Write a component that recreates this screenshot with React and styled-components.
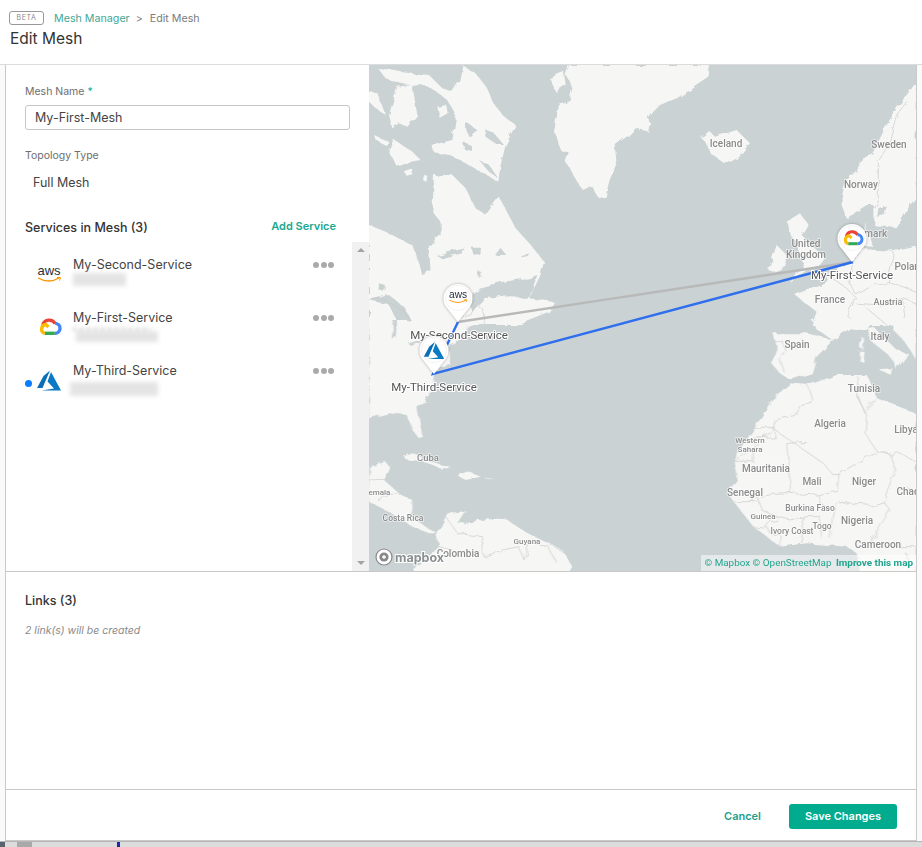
import React from 'react'
import styled, { createGlobalStyle } from 'styled-components'

const GlobalStyle = createGlobalStyle`
    html, body { margin: 0; padding: 0; background: #fff; }
    body { font-family: "Inter", "Liberation Sans", sans-serif; color: #333; }
`

const services = [
    { name: 'My-Second-Service', logo: 'aws', blur: { left: 0, width: 53, top: 0, height: 13 } },
    { name: 'My-First-Service', logo: 'gcp', blur: { left: 3, width: 82, top: 5, height: 11 }, peek: true },
    { name: 'My-Third-Service', logo: 'azure', blur: { left: -3, width: 88, top: 3, height: 14 }, active: true },
]

// coastlines are traced per quadrant of the map, in 3x coordinates
const northWest = {
    land: [
        'M600,0 L590,30 610,70 600,110 570,120 560,170 555,200 580,260 600,260 590,290 620,340 640,375 670,365 690,400 710,395 720,350 745,290 740,240 780,210 800,190 840,200 L840,0 Z',
        'M25,8 L100,22 180,30 220,70 250,80 270,50 280,0 320,25 350,65 375,115 400,150 440,180 410,240 395,300 388,350 340,325 290,295 240,270 195,262 190,240 250,225 255,195 262,150 240,110 210,85 170,60 130,62 90,55 50,40 Z',
        'M85,65 L130,60 145,150 115,185 90,175 70,190 60,150 Z',
        'M0,75 L25,85 50,150 20,130 0,110 Z',
        'M75,225 L130,260 155,285 125,290 85,305 60,265 Z',
        'M15,210 L60,230 50,240 20,225 Z',
        'M205,125 L232,120 236,145 212,158 Z',
        'M108,322 L134,312 130,328 112,332 Z',
        'M165,330 L175,332 172,350 162,346 Z',
        'M0,480 L50,500 130,540 160,630 185,620 180,550 215,510 215,470 190,440 195,330 250,330 290,370 320,430 350,450 390,395 440,490 490,545 525,590 515,630 480,700 560,712 540,740 440,780 L0,780 Z',
        'M540,40 L585,20 590,60 560,80 Z',
    ],
    water: [
        'M290,170 L325,195 300,215 292,195 Z',
        'M345,190 L375,205 405,240 385,240 350,215 Z',
        'M283,230 L305,240 310,258 285,252 Z',
        'M330,285 L360,300 388,340 360,320 Z',
        'M300,700 L340,665 400,650 480,640 505,630 478,705 420,690 345,700 310,740 Z',
        'M200,570 L290,550 280,565 220,578 Z',
        'M305,545 L335,545 335,570 310,565 Z',
        'M378,570 L395,548 412,570 Z',
        'M455,575 L480,565 475,578 Z',
        'M325,615 L340,625 330,640 Z',
        'M30,655 L48,660 45,680 28,675 Z',
        'M0,705 L60,690 110,730 130,775 90,780 60,720 Z',
    ],
    borders: ['M0,705 L35,700 100,735 130,775', 'M230,775 L270,760 305,750 320,720 340,730 350,780'],
}

const southWest = {
    land: [
        'M0,0 L360,0 300,20 270,60 240,75 240,130 195,165 185,220 145,265 160,350 150,355 130,330 115,285 60,280 0,295 Z',
        'M105,410 L130,400 190,425 250,445 210,445 170,425 110,418 Z',
        'M270,460 L290,452 335,470 290,480 270,470 Z',
        'M355,477 L375,480 355,482 Z',
        'M0,440 L50,425 60,440 45,480 90,520 130,540 130,590 170,620 205,640 180,640 130,620 60,575 0,545 Z',
        'M205,640 L230,590 290,570 265,610 290,610 330,600 410,595 450,625 530,665 580,690 610,740 600,756 130,756 210,680 Z',
    ],
    water: [
        'M70,0 L85,0 80,50 72,60 Z',
        'M120,70 L170,55 150,70 125,78 Z',
        'M285,600 L300,605 290,618 Z',
    ],
    borders: [
        'M0,480 L45,478', 'M25,540 L60,520 90,520', 'M230,590 L265,640 340,650 345,710 400,690 450,680 465,720',
        'M465,720 L480,670 540,680 560,725', 'M210,680 L250,690', 'M545,675 L590,700',
    ],
}

const northEast = {
    land: [
        'M0,200 L40,140 60,120 110,100 160,70 205,40 210,0 L0,0 Z',
        'M180,215 L205,195 225,215 290,195 330,235 300,270 255,295 210,265 200,235 Z',
        'M440,470 L480,445 503,478 485,510 520,545 555,580 540,600 500,615 450,655 470,620 495,600 478,570 470,530 450,510 Z',
        'M385,615 L410,540 440,570 440,605 400,620 Z',
        'M605,395 L620,340 660,300 700,260 720,220 740,180 770,130 800,90 830,50 L830,395 810,420 770,490 700,480 700,420 680,420 620,460 605,420 Z',
        'M680,470 L670,545 700,548 680,495 Z',
        'M465,690 L510,670 560,650 570,625 640,590 665,555 750,560 830,545 L830,780 515,780 530,740 Z',
    ],
    water: ['M715,430 L740,420 735,450 712,455 Z'],
    borders: [
        'M800,110 L770,150 745,240 715,290 715,400 700,430',
        'M575,640 L620,670 650,700 640,715 620,750 650,780',
        'M640,590 L625,650 650,690 700,660 745,650 760,560',
        'M745,650 L830,680', 'M650,715 L720,720 790,700 830,720',
        'M680,730 L740,780', 'M790,700 L800,780',
    ],
}

const southEast = {
    land: [
        'M515,0 L530,30 580,60 630,25 665,30 700,20 770,90 805,100 770,150 765,130 740,100 690,60 680,0 Z',
        'M760,0 L830,0 L830,120 790,60 760,30 Z',
        'M400,40 L500,40 580,60 530,110 515,160 450,180 415,155 395,130 410,80 Z',
        'M662,50 L672,55 670,90 660,85 Z',
        'M660,95 L674,95 670,125 658,125 Z',
        'M716,148 L757,145 752,165 Z',
        'M285,430 L290,400 340,330 395,240 450,190 505,195 590,165 680,165 710,235 830,280 L830,756 660,756 650,700 620,680 500,670 420,680 340,620 285,550 262,520 290,480 Z',
    ],
    water: [],
    borders: [
        'M400,65 L430,65 435,90 420,120 430,155',
        'M505,195 L518,240 480,255 470,285 405,300 405,325 285,428',
        'M340,325 L405,325 405,350 340,355 340,425 285,428',
        'M405,330 L550,430 580,465 597,462 710,393 750,405 770,395 830,425',
        'M440,370 L500,368 M440,370 L452,518 395,520 370,525 355,535',
        'M597,462 L592,510 530,525 450,520',
        'M710,393 L675,340 680,285 650,225 655,170',
        'M650,225 L675,280 705,235',
        'M750,405 L765,450 730,545 750,570 720,620 690,670',
        'M590,550 L620,545 700,555 730,545',
        'M590,550 L575,610 570,655',
        'M490,590 L540,590 545,655 M490,590 L485,670',
        'M350,530 L365,570 410,590 450,600 490,590',
        'M535,525 L540,550 580,570',
        'M380,620 L390,640 420,640 420,685',
        'M340,620 L375,625 390,605 415,600',
        'M285,545 L350,545',
        'M800,500 L830,520 M775,680 L830,680 M800,700 L805,750',
    ],
}

const quadrants = [
    { key: 'nw', at: [0, 0], ...northWest },
    { key: 'sw', at: [0, 255], ...southWest },
    { key: 'ne', at: [271, 0], ...northEast },
    { key: 'se', at: [271, 255], ...southEast },
]

const mapLabels = [
    { x: 357, y: 82, t: 'Iceland', size: 10 },
    { x: 437, y: 182, t: 'United', size: 10 },
    { x: 437, y: 193, t: 'Kingdom', size: 10 },
    { x: 492, y: 123, t: 'Norway', size: 10 },
    { x: 520, y: 83, t: 'Sweden', size: 10 },
    { x: 498, y: 172, t: 'Denmark', size: 10 },
    { x: 541, y: 205, t: 'Poland', size: 10 },
    { x: 461, y: 238, t: 'France', size: 10 },
    { x: 519, y: 240, t: 'Austria', size: 9 },
    { x: 511, y: 275, t: 'Italy', size: 10 },
    { x: 428, y: 283, t: 'Spain', size: 10 },
    { x: 495, y: 327, t: 'Tunisia', size: 10 },
    { x: 461, y: 362, t: 'Algeria', size: 10 },
    { x: 537, y: 368, t: 'Libya', size: 10 },
    { x: 381, y: 378, t: 'Western', size: 8 },
    { x: 381, y: 387, t: 'Sahara', size: 8 },
    { x: 397, y: 407, t: 'Mauritania', size: 10 },
    { x: 443, y: 420, t: 'Mali', size: 10 },
    { x: 495, y: 420, t: 'Niger', size: 10 },
    { x: 539, y: 430, t: 'Chad', size: 10 },
    { x: 376, y: 431, t: 'Senegal', size: 10 },
    { x: 394, y: 454, t: 'Guinea', size: 8 },
    { x: 441, y: 446, t: 'Burkina Faso', size: 8.5 },
    { x: 453, y: 464, t: 'Togo', size: 8.5 },
    { x: 488, y: 459, t: 'Nigeria', size: 10 },
    { x: 423, y: 469, t: 'Ivory Coast', size: 8.5 },
    { x: 509, y: 483, t: 'Cameroon', size: 10 },
    { x: 59, y: 396, t: 'Cuba', size: 9.5 },
    { x: 2, y: 430, t: 'Guatemala', size: 8 },
    { x: 34, y: 456, t: 'Costa Rica', size: 8.5 },
    { x: 158, y: 479, t: 'Guyana', size: 8 },
    { x: 89, y: 492, t: 'Colombia', size: 10 },
]

const pinLabels = [
    { x: 90, y: 274, t: 'My-Second-Service' },
    { x: 483, y: 214, t: 'My-First-Service' },
    { x: 65, y: 326, t: 'My-Third-Service' },
]

const taskChips = [
    { width: 5, color: '#59646f' },
    { width: 12, color: '#dcdcdc' },
    { width: 15, color: '#a9a9a9' },
    { width: 85, color: '#dcdcdc' },
    { width: 3, color: '#1c2aa8' },
]

function AwsLogo({ x, y, scale = 1 }) {
    return (
        <g transform={`translate(${x} ${y}) scale(${scale})`}>
            <LogoText x="0" y="1" textAnchor="middle">aws</LogoText>
            <path d="M-11,4 Q0,10 10,4" fill="none" stroke="#f79400" strokeWidth="1.4" />
            <path d="M8,3.5 L11.5,3.5 10.5,6.5" fill="none" stroke="#f79400" strokeWidth="1" />
        </g>
    )
}

function GcpLogo({ x, y, scale = 1 }) {
    return (
        <g transform={`translate(${x} ${y}) scale(${scale})`} fill="none" strokeWidth="3.2">
            <path d="M-6,-2 A6.5,6.5 0 0 1 6,-3" stroke="#ea4335" />
            <path d="M6,-3.5 A4.6,4.6 0 0 1 5.5,6" stroke="#4285f4" />
            <path d="M5.5,6 H-4" stroke="#34a853" />
            <path d="M-4,6 A4.3,4.3 0 0 1 -3,-2.4 L-0.5,0" stroke="#fbbc05" />
        </g>
    )
}

function AzureLogo({ x, y, scale = 1 }) {
    return (
        <g transform={`translate(${x} ${y}) scale(${scale})`}>
            <path d="M1,-9.5 L-5.5,-4 -12,8 H-6.5 Z" fill="#0a6fb8" />
            <path d="M2,-8 L-1.5,1.5 5,8.5 -7.5,10.5 H12 Z" fill="#0a7ac4" />
        </g>
    )
}

function Pin({ x, y, children }) {
    return (
        <PinGroup transform={`translate(${x} ${y})`}>
            <path d="M0,0 L-10,-13 A14.5,14.5 0 1 1 10,-13 Z" fill="#fff" />
            <circle cx="0" cy="-24" r="12.5" fill="none" stroke="#efefef" strokeWidth=".8" />
            {children}
        </PinGroup>
    )
}

function ServiceLogo({ type }) {
    return (
        <svg width="30" height="28" viewBox="-15 -14 30 28">
            {type === 'aws' && <AwsLogo x={0} y={0} />}
            {type === 'gcp' && <GcpLogo x={0} y={0} scale={1.05} />}
            {type === 'azure' && <AzureLogo x={0} y={0} />}
        </svg>
    )
}

function WorldMap() {
    return (
        <MapSvg viewBox="0 0 547 506" preserveAspectRatio="none">
            <defs>
                <filter id="coast" x="0" y="0" width="100%" height="100%">
                    <feTurbulence type="fractalNoise" baseFrequency=".09" numOctaves="3" seed="4" />
                    <feDisplacementMap in="SourceGraphic" scale="6" />
                </filter>
            </defs>
            <rect width="547" height="506" fill="#cad2d3" />
            <g filter="url(#coast)">
                {quadrants.map((q) => (
                    <g key={q.key} transform={`translate(${q.at[0]} ${q.at[1]}) scale(.3333)`}>
                        {q.land.map((d) => <path key={d} d={d} fill="#f6f6f5" />)}
                        {q.water.map((d) => <path key={d} d={d} fill="#cad2d3" />)}
                        {q.borders.map((d) => <path key={d} d={d} fill="none" stroke="#c8c8c8" strokeWidth="2" />)}
                    </g>
                ))}
            </g>
            {mapLabels.map((l) => <MapLabel key={l.t} x={l.x} y={l.y} $size={l.size} textAnchor="middle">{l.t}</MapLabel>)}
            <path d="M89,257 L484,197" stroke="#b9b9b9" strokeWidth="2.4" />
            <path d="M89,257 L64,309 L484,197" fill="none" stroke="#2f6fed" strokeWidth="2.4" />
            {pinLabels.map((l) => <PinLabel key={l.t} x={l.x} y={l.y} textAnchor="middle">{l.t}</PinLabel>)}
            <Pin x={89} y={257}><AwsLogo x={0} y={-25} scale={0.78} /></Pin>
            <Pin x={65} y={309}><AzureLogo x={0} y={-24} scale={0.85} /></Pin>
            <Pin x={483} y={197}><GcpLogo x={0} y={-24} scale={0.95} /></Pin>
        </MapSvg>
    )
}

function App() {
    return (
        <Page>
            <GlobalStyle />
            <Header>
                <Crumbs>
                    <Beta>BETA</Beta>
                    <CrumbLink>Mesh Manager</CrumbLink>
                    <CrumbSep>&gt;</CrumbSep>
                    <CrumbCurrent>Edit Mesh</CrumbCurrent>
                </Crumbs>
                <Title>Edit Mesh</Title>
            </Header>
            <Shell>
                <TopPanel>
                    <Side>
                        <Form>
                            <FieldLabel>Mesh Name <Required>*</Required></FieldLabel>
                            <NameInput readOnly value="My-First-Mesh" />
                            <TopologyLabel>Topology Type</TopologyLabel>
                            <TopologyValue>Full Mesh</TopologyValue>
                            <ServicesHead>
                                <SectionTitle>Services in Mesh (3)</SectionTitle>
                                <AddLink>Add Service</AddLink>
                            </ServicesHead>
                        </Form>
                        <ListArea>
                            <List>
                                {services.map((s) => (
                                    <Row key={s.name}>
                                        <Dot $on={s.active} />
                                        <LogoBox><ServiceLogo type={s.logo} /></LogoBox>
                                        <RowText>
                                            <RowName>{s.name}</RowName>
                                            <Blurred
                                                $left={s.blur.left}
                                                $width={s.blur.width}
                                                $top={s.blur.top}
                                                $height={s.blur.height}
                                                $peek={s.peek}
                                            />
                                        </RowText>
                                        <More><i /><i /><i /></More>
                                    </Row>
                                ))}
                            </List>
                            <Scrollbar>
                                <Arrow $up />
                                <Arrow />
                            </Scrollbar>
                        </ListArea>
                    </Side>
                    <MapPane>
                        <WorldMap />
                        <MapboxMark>
                            <svg width="18" height="18" viewBox="0 0 18 18">
                                <circle cx="9" cy="9" r="8" fill="#fff" stroke="#888" strokeWidth="1.2" />
                                <circle cx="9" cy="9" r="4.6" fill="#888" />
                                <path d="M7,9 H11 M9,7 V11" stroke="#fff" strokeWidth="1.4" />
                            </svg>
                            <MarkWord>mapbox</MarkWord>
                        </MapboxMark>
                        <Attribution>
                            <span>© Mapbox</span> <span>© OpenStreetMap</span> <b>Improve this map</b>
                        </Attribution>
                    </MapPane>
                </TopPanel>
                <Links>
                    <SectionTitle>Links (3)</SectionTitle>
                    <LinksNote>2 link(s) will be created</LinksNote>
                </Links>
                <Footer>
                    <CancelButton>Cancel</CancelButton>
                    <SaveButton>Save Changes</SaveButton>
                </Footer>
            </Shell>
            <TaskStrip>
                {taskChips.map((c, i) => <TaskChip key={i} $width={c.width} $color={c.color} />)}
            </TaskStrip>
        </Page>
    )
}

export default App

const Page = styled.div`
    width: 922px;
    height: 847px;
    display: flex;
    flex-direction: column;
    overflow: hidden;
    background: #fafafa;
`

const Header = styled.header`
    height: 65px;
    flex: none;
    box-sizing: border-box;
    background: #fff;
    border-bottom: 1px solid #dcdcdc;
    padding: 11px 0 0 9px;
`

const Crumbs = styled.div`
    display: flex;
    align-items: center;
    height: 14px;
    font-size: 10.7px;
`

const Beta = styled.span`
    width: 33px;
    height: 12px;
    border: 1px solid #999;
    border-radius: 3px;
    font-size: 7px;
    letter-spacing: .6px;
    line-height: 12px;
    text-align: center;
    color: #888;
    margin-right: 10px;
`

const CrumbLink = styled.span`
    color: #40a896;
`

const CrumbSep = styled.span`
    color: #888;
    margin: 0 7px 0 6px;
`

const CrumbCurrent = styled.span`
    color: #7b7b7b;
`

const Title = styled.h1`
    margin: 4px 0 0 1px;
    font-size: 15.5px;
    line-height: 20px;
    font-weight: 400;
    color: #333;
`

const Shell = styled.main`
    flex: 1;
    margin: 0 5px;
    display: flex;
    flex-direction: column;
    background: #fff;
    border: 1px solid #c9c9c9;
    border-top: 0;
    min-height: 0;
`

const TopPanel = styled.section`
    height: 506px;
    flex: none;
    display: grid;
    grid-template-columns: 363px 1fr;
    border-bottom: 1px solid #c9c9c9;
`

const Side = styled.div`
    display: flex;
    flex-direction: column;
    min-height: 0;
`

const Form = styled.div`
    padding: 20px 19px 0;
`

const FieldLabel = styled.div`
    font-size: 10.5px;
    line-height: 14px;
    color: #6e6e6e;
`

const Required = styled.span`
    color: #1aa98f;
`

const NameInput = styled.input`
    display: block;
    width: 325px;
    height: 25px;
    margin-top: 6px;
    padding: 0 9px;
    box-sizing: border-box;
    border: 1px solid #c6c6c6;
    border-radius: 3px;
    font: 12.5px "Inter", sans-serif;
    color: #444;
    outline: none;
`

const TopologyLabel = styled(FieldLabel)`
    margin-top: 19px;
`

const TopologyValue = styled.div`
    margin: 12px 0 0 8px;
    font-size: 12.5px;
    line-height: 16px;
    color: #444;
`

const ServicesHead = styled.div`
    display: flex;
    justify-content: space-between;
    align-items: center;
    margin-top: 27px;
    height: 20px;
    padding-right: 14px;
`

const SectionTitle = styled.h2`
    margin: 0;
    font-size: 12.5px;
    line-height: 16px;
    font-weight: 500;
    color: #333;
`

const AddLink = styled.a`
    margin-top: -4px;
    font-size: 11px;
    font-weight: 600;
    color: #1aa98f;
`

const ListArea = styled.div`
    flex: 1;
    display: flex;
    min-height: 0;
    margin-top: 4px;
`

const List = styled.div`
    flex: 1;
`

const Row = styled.div`
    height: 53px;
    display: flex;
    align-items: flex-start;
    padding-top: 15px;
    box-sizing: border-box;
`

const Dot = styled.span`
    width: 7px;
    height: 7px;
    margin: 17px 0 0 19px;
    flex: none;
    border-radius: 50%;
    background: ${(p) => (p.$on ? '#0a7cff' : 'transparent')};
`

const LogoBox = styled.div`
    width: 30px;
    height: 28px;
    margin: 3px 0 0 2px;
    flex: none;
`

const RowText = styled.div`
    flex: 1;
    margin-left: 9px;
`

const RowName = styled.div`
    font-size: 12.5px;
    line-height: 16px;
    color: #444;
`

const Blurred = styled.div`
    position: relative;
    height: ${(p) => p.$height}px;
    margin: ${(p) => p.$top}px 0 0 ${(p) => p.$left}px;
    width: ${(p) => p.$width}px;
    background: #e4e4e4;
    filter: blur(2px);
    ${(p) => p.$peek && `
        &:before {
            content: "";
            position: absolute;
            left: -3px;
            top: -3px;
            width: 78px;
            height: 2px;
            background: repeating-linear-gradient(90deg, #aaa 0 3px, transparent 3px 7px);
        }
    `}
`

const More = styled.div`
    display: flex;
    gap: 1.5px;
    padding: 5px 18px 0 0;
    i {
        width: 6px;
        height: 6px;
        border-radius: 50%;
        background: #aaa;
    }
`

const Scrollbar = styled.div`
    width: 17px;
    flex: none;
    background: #f1f1f1;
    display: flex;
    flex-direction: column;
    justify-content: space-between;
    align-items: center;
    padding: 6px 0;
    box-sizing: border-box;
`

const Arrow = styled.span`
    width: 0;
    height: 0;
    border-left: 4px solid transparent;
    border-right: 4px solid transparent;
    ${(p) => (p.$up ? 'border-bottom: 4px solid #a3a3a3;' : 'border-top: 4px solid #a3a3a3;')}
`

const MapPane = styled.div`
    position: relative;
    overflow: hidden;
`

const MapSvg = styled.svg`
    display: block;
    width: 100%;
    height: 100%;
    font-family: "Roboto", sans-serif;
`

const PinGroup = styled.g`
    filter: drop-shadow(0 0 1.5px rgba(0, 0, 0, .3));
`

const MapLabel = styled.text`
    font-size: ${(p) => p.$size}px;
    font-weight: 500;
    fill: #8b8b8b;
    stroke: rgba(255, 255, 255, .7);
    stroke-width: 1.5px;
    paint-order: stroke;
`

const PinLabel = styled.text`
    font-size: 11.5px;
    fill: #555;
    stroke: #fff;
    stroke-width: 2px;
    paint-order: stroke;
`

const LogoText = styled.text`
    font-family: "Liberation Sans", sans-serif;
    font-size: 13px;
    fill: #252f3e;
`

const MapboxMark = styled.div`
    position: absolute;
    left: 6px;
    bottom: 5px;
    display: flex;
    align-items: center;
    gap: 2px;
`

const MarkWord = styled.span`
    font-family: "Inter", sans-serif;
    font-size: 12.5px;
    font-weight: 700;
    color: #8a8f90;
    -webkit-text-stroke: 2px #fff;
    paint-order: stroke fill;
`

const Attribution = styled.div`
    position: absolute;
    right: 0;
    bottom: 0;
    height: 16px;
    padding: 0 3px;
    background: rgba(255, 255, 255, .5);
    font-family: "Roboto", sans-serif;
    font-size: 9.9px;
    line-height: 16px;
    color: #21a58f;
    white-space: nowrap;
    b {
        margin-left: 2px;
        font-weight: 700;
    }
`

const Links = styled.section`
    flex: 1;
    padding: 21px 19px 0;
`

const LinksNote = styled.p`
    margin: 15px 0 0;
    font-size: 10.5px;
    line-height: 14px;
    font-style: italic;
    color: #8a8a8a;
`

const Footer = styled.footer`
    height: 51px;
    flex: none;
    box-sizing: border-box;
    border-top: 1px solid #c9c9c9;
    display: flex;
    justify-content: flex-end;
    align-items: center;
    padding: 2px 19px 0 0;
    gap: 28px;
`

const CancelButton = styled.button`
    border: 0;
    background: none;
    padding: 0;
    font: 600 11px "Inter", sans-serif;
    color: #1f9f8b;
`

const SaveButton = styled.button`
    width: 108px;
    height: 25px;
    border: 0;
    border-radius: 3px;
    background: #00ab8e;
    font: 600 11px "Inter", sans-serif;
    color: #fff;
`

const TaskStrip = styled.div`
    height: 5px;
    flex: none;
    display: flex;
    background: #dcdcdc;
    border-top: 1px solid #b5b5b5;
`

const TaskChip = styled.span`
    width: ${(p) => p.$width}px;
    background: ${(p) => p.$color};
`
